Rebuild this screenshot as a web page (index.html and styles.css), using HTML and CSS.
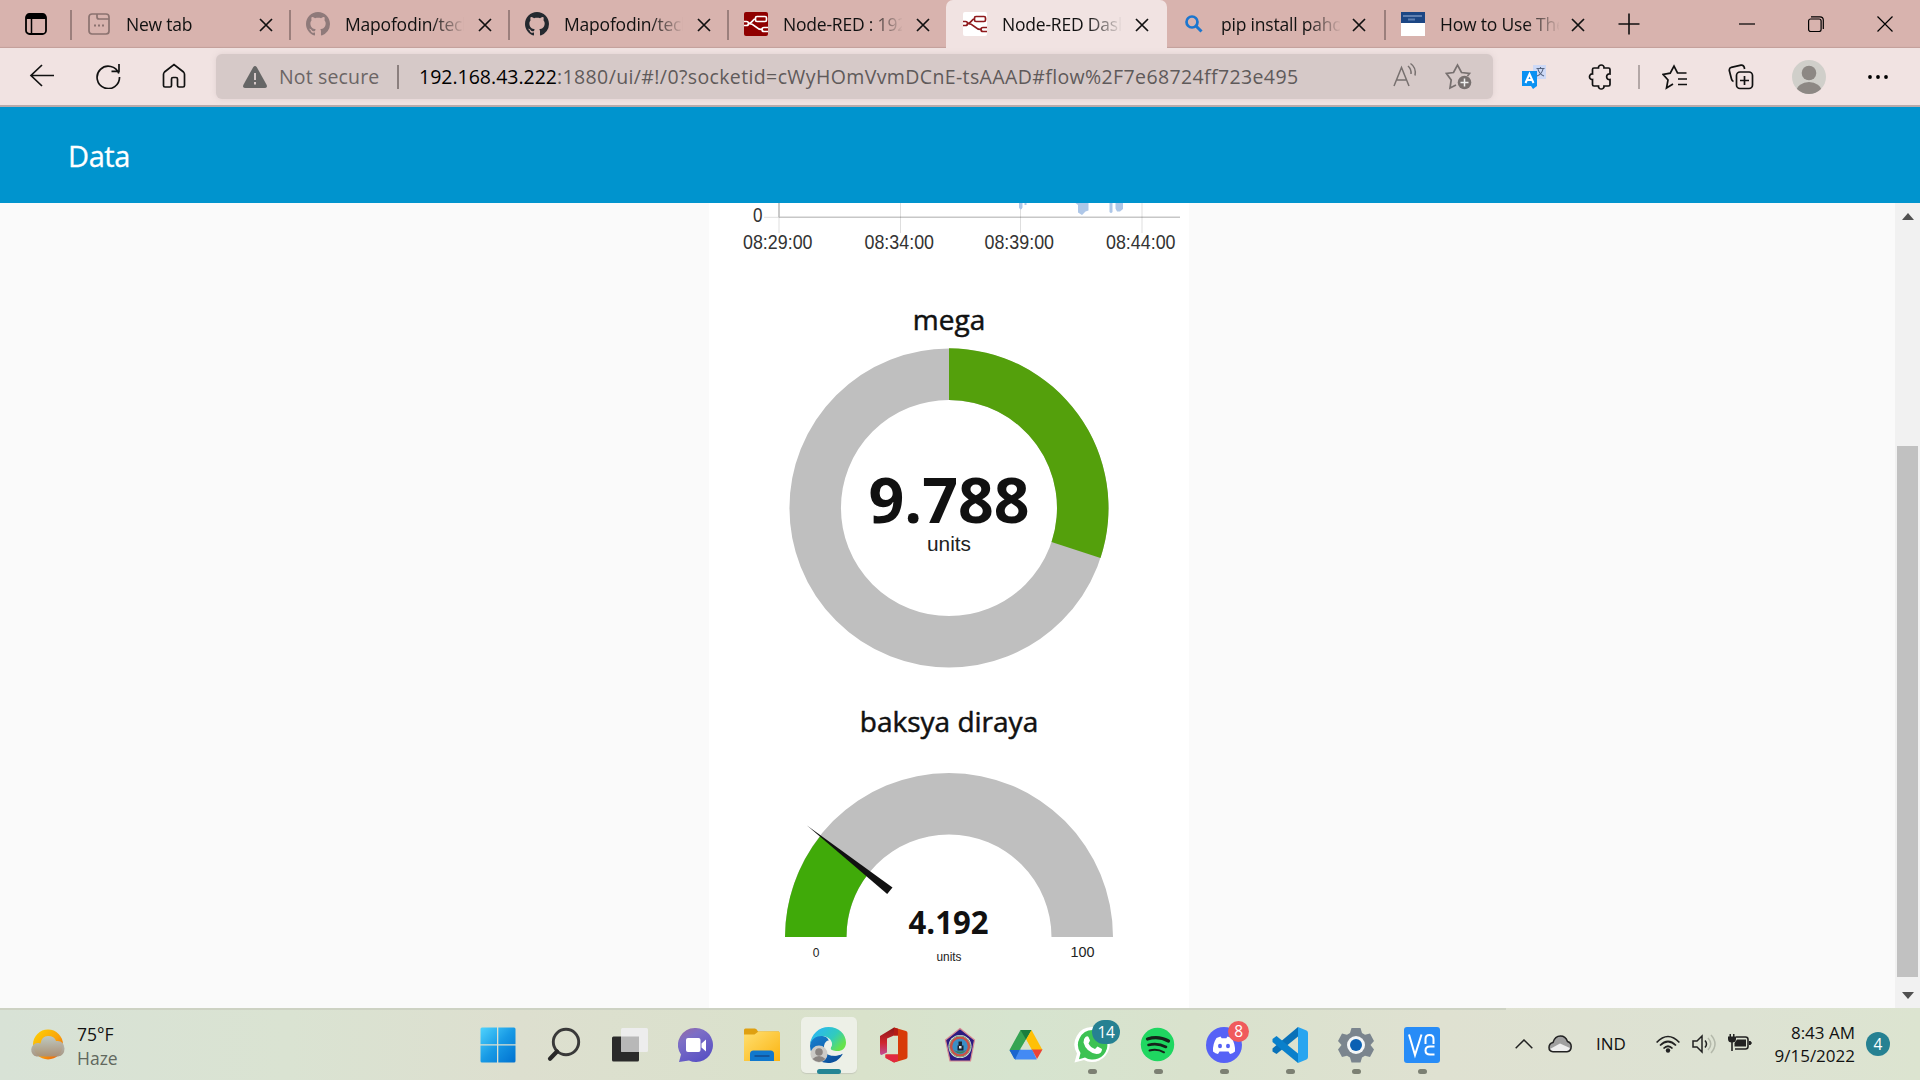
FILE: index.html
```html
<!DOCTYPE html>
<html lang="en">
<head>
<meta charset="utf-8">
<title>Node-RED Dashboard</title>
<link rel="stylesheet" href="styles.css">
</head>
<body>
<svg class="defs" width="0" height="0" aria-hidden="true">
  <symbol id="x" viewBox="0 0 14 14"><path d="M1 1l12 12M13 1L1 13" fill="none" stroke="#111" stroke-width="1.7"/></symbol>
  <symbol id="github" viewBox="0 0 16 16"><path fill-rule="evenodd" d="M8 0C3.58 0 0 3.58 0 8c0 3.54 2.29 6.53 5.47 7.59.4.07.55-.17.55-.38 0-.19-.01-.82-.01-1.49-2.01.37-2.53-.49-2.69-.94-.09-.23-.48-.94-.82-1.13-.28-.15-.68-.52-.01-.53.63-.01 1.08.58 1.23.82.72 1.21 1.87.87 2.33.66.07-.52.28-.87.51-1.07-1.78-.2-3.64-.89-3.64-3.95 0-.87.31-1.59.82-2.15-.08-.2-.36-1.02.08-2.12 0 0 .67-.21 2.2.82.64-.18 1.32-.27 2-.27s1.36.09 2 .27c1.53-1.04 2.2-.82 2.2-.82.44 1.1.16 1.92.08 2.12.51.56.82 1.27.82 2.15 0 3.07-1.87 3.75-3.65 3.95.29.25.54.73.54 1.48 0 1.07-.01 1.93-.01 2.2 0 .21.15.46.55.38A8.01 8.01 0 0 0 16 8c0-4.42-3.58-8-8-8z"/></symbol>
  <symbol id="nodered" viewBox="0 0 24 24"><g fill="none" stroke="currentColor" stroke-width="1.7"><rect x="11.5" y="4.5" width="11" height="5" rx="1.5"/><path d="M0 9.500h2.500q2 0 2 2t-2 2H0M24 15.500h-4q-2 0-2 2t2 2h4M4.500 11.500C9 11.500 8 7 11.500 7M4.500 11.500C12 11.500 11 17.500 18 17.500"/></g></symbol>
</svg>

<header class="tabs">
  <div class="tab-actions"><svg width="22" height="22" viewBox="0 0 22 22"><rect x="1" y="1" width="20" height="20" rx="3.500" fill="none" stroke="#000" stroke-width="1.800"/><path d="M1 6V4q0-3 3-3h14q3 0 3 3v2z"/><path d="M6.500 6v15" stroke="#000" stroke-width="1.500"/></svg></div>
  <div class="tab">
    <svg class="fav" viewBox="0 0 24 24"><g fill="none" stroke="#8b7370" stroke-width="1.700"><rect x="2" y="2" width="20" height="20" rx="3"/><path d="M10 2v3q0 2 2 2h10"/></g><path d="M7 12.500h2v2H7zM11 12.500h2v2h-2zM15 12.500h2v2h-2z" fill="#8b7370"/></svg>
    <span class="title t-new">New tab</span><svg class="close"><use href="#x"/></svg></div>
  <div class="tab"><svg class="fav" fill="#8f7a7a"><use href="#github"/></svg><span class="title">Mapofodin/tech</span><svg class="close"><use href="#x"/></svg></div>
  <div class="tab"><svg class="fav" fill="#24292f"><use href="#github"/></svg><span class="title">Mapofodin/tech</span><svg class="close"><use href="#x"/></svg></div>
  <div class="tab"><svg class="fav nr-red"><use href="#nodered"/></svg><span class="title">Node-RED : 192.</span><svg class="close"><use href="#x"/></svg></div>
  <div class="tab active"><svg class="fav nr-white"><use href="#nodered"/></svg><span class="title">Node-RED Dash</span><svg class="close"><use href="#x"/></svg></div>
  <div class="tab narrow plain"><svg class="fav" viewBox="0 0 24 24"><circle cx="10" cy="10" r="5.500" fill="none" stroke="#1b76cf" stroke-width="2.700"/><path d="M14 14l5.500 5.500" stroke="#1b76cf" stroke-width="3"/></svg><span class="title">pip install paho</span><svg class="close"><use href="#x"/></svg></div>
  <div class="tab narrow"><svg class="fav" viewBox="0 0 24 24"><path fill="#fff" d="M0 0h24v24H0z"/><path fill="#1c4684" d="M0 0h24v11H0z"/><path d="M2 4h19M7 7.500h7" stroke="#5f7fb0" stroke-width="2"/></svg><span class="title">How to Use The</span><svg class="close"><use href="#x"/></svg></div>
  <div class="new"><svg width="22" height="22" viewBox="0 0 22 22"><path d="M11 .5v21M.5 11h21" stroke="#111" stroke-width="1.600"/></svg></div>
  <div class="window">
    <svg width="16" height="16" viewBox="0 0 16 16"><path d="M0 8h16" stroke="#000" stroke-width="1.200"/></svg>
    <svg width="16" height="16" viewBox="0 0 16 16"><g fill="none" stroke="#000" stroke-width="1.200"><rect x=".6" y="3" width="12.500" height="12.500" rx="2"/><path d="M3 .8h9q3.300 0 3.300 3.300V13"/></g></svg>
    <svg width="16" height="16" viewBox="0 0 16 16"><path d="M.5.5l15 15M15.500.5l-15 15" stroke="#000" stroke-width="1.200"/></svg>
  </div>
</header>

<nav class="toolbar">
  <div class="nav-icons">
    <svg width="26" height="26" viewBox="0 0 26 26"><path d="M25 12.500H2M13 2L2 12.500 13 23" fill="none" stroke="#111" stroke-width="1.700"/></svg>
    <svg width="26" height="26" viewBox="0 0 26 26"><path d="M23.800 10.500A11.200 11.200 0 1 0 24.500 14M24 1v7.300h-7.500" fill="none" stroke="#111" stroke-width="1.700"/></svg>
    <svg width="26" height="26" viewBox="0 0 26 26"><path d="M2.500 11.500Q2.500 10 3.500 9L13 1.500 22.500 9q1 1 1 2.500v11q0 1.500-1.500 1.500h-4q-1.500 0-1.500-1.500V16q0-1.500-1.500-1.500h-3q-1.500 0-1.500 1.500v6.500Q10.500 24 9 24H4q-1.500 0-1.500-1.500z" fill="none" stroke="#111" stroke-width="1.700"/></svg>
  </div>
  <div class="address">
    <svg class="warn" width="24" height="22" viewBox="0 0 24 22"><path d="M10.300 1Q12-1 13.700 1L23.700 19Q24.500 22 21.500 22h-19Q-.5 22 .3 19z" fill="#666"/><path d="M12 7v7M12 16v2.500" stroke="#d5c8c8" stroke-width="2"/></svg>
    <span class="insecure">Not secure</span><i class="divider"></i>
    <span class="url"><b>192.168.43.222</b>:1880/ui/#!/0?socketid=cWyHOmVvmDCnE-tsAAAD#flow%2F7e68724ff723e495</span>
    <svg class="read" width="26" height="26" viewBox="0 0 26 26"><path d="M2 24L9.500 5.500 17 24M4.500 18h10M16 4q3.500 3 3 8M18.500 1.500q6 4 4.500 12" fill="none" stroke="#77706f" stroke-width="1.500"/></svg>
    <svg width="27" height="27" viewBox="0 0 27 27"><path d="M11 22l-6 3 1.200-8L1.500 10.500l7-1L12.500 2l4 7.500 8 1-2 2.500" fill="none" stroke="#77706f" stroke-width="1.700"/><circle cx="19.500" cy="19.500" r="6.800" fill="#77706f"/><path d="M19.500 15.500v8M15.500 19.500h8" stroke="#eee" stroke-width="1.500"/></svg>
  </div>
  <div class="tools">
    <svg class="translate" width="26" height="26" viewBox="0 0 26 26"><path d="M12 1h13v14H12z" fill="#cdd9f7"/><path d="M15.500 4.500h8M19.500 3v2M22 5q-1 5-6 7M17 5q1 5 6 7" stroke="#566580" fill="none" stroke-width="1.100"/><path d="M1 7h15v15l-4 3-2-3H1z" fill="#0a91f2"/><path d="M4.500 19l4-9 4 9M6 16h5" fill="none" stroke="#fff" stroke-width="2"/></svg>
    <svg class="puzzle" width="26" height="26" viewBox="0 0 26 26"><path d="M6 4h4.500C10 0 16.500 0 16 4h4.500Q22 4 22 5.500V10C17.500 9.500 17.500 16 22 15.500v5q0 1.500-1.500 1.500H16c.5 4-6 4-5.500 0H6q-1.500 0-1.500-1.500v-5C.500 16 .5 9.500 4.500 10V5.500Q4.500 4 6 4z" fill="none" stroke="#111" stroke-width="1.700"/></svg>
    <i class="divider"></i>
    <svg class="favs" width="26" height="26" viewBox="0 0 26 26"><path d="M11 20l-6.500 4L6 16 1.200 10.500l7-1.300L12 2l3.500 7h9M16 15h9M16 20.500h9" fill="none" stroke="#111" stroke-width="1.700"/></svg>
    <svg class="coll" width="26" height="26" viewBox="0 0 26 26"><g fill="none" stroke="#111" stroke-width="1.700"><rect x="8.500" y="8" width="16" height="16.500" rx="3.500"/><path d="M16.500 12v9M12 16.500h9M5.500 17.500Q4 17 3.500 15L1.300 6.500Q1 4 3.300 3.300L13 1.200q2.500-.4 3.300 2.300l.3 1.500"/></g></svg>
    <svg class="avatar" width="34" height="34" viewBox="0 0 34 34"><clipPath id="av"><circle cx="17" cy="17" r="17"/></clipPath><g clip-path="url(#av)"><path fill="#d0cfca" d="M0 0h34v34H0z"/><circle cx="17" cy="13" r="7.300" fill="#8d8884"/><ellipse cx="17" cy="31" rx="12.500" ry="9" fill="#8d8884"/></g></svg>
    <svg class="more" width="22" height="6" viewBox="0 0 22 6"><circle cx="3" cy="3" r="1.900"/><circle cx="11" cy="3" r="1.900"/><circle cx="19" cy="3" r="1.900"/></svg>
  </div>
</nav>

<section class="titlebar"><h1>Data</h1></section>

<main class="page">
  <div class="canvas">
    <div class="card">
      <svg class="chart" width="480" height="60" viewBox="709 203 480 60">
        <g stroke="#000" stroke-opacity=".13" stroke-width="1"><path d="M900.500 203v30M1020.500 203v30M1142 203v30M779 203v30" /><path stroke-opacity=".22" stroke-width="1.400" d="M779 217.300h401M779 203v14"/><path d="M764 217.300h15"/></g>
        <path d="M1019 203h3.500v4.500q-1.700 4-3.500 0zM1024.500 203h2v2h-2zM1075.500 203h13v7.500l-3 1-3.500 3.500-4-2.500V205zM1109.500 203h3v9q-1.500 2-3 0zM1115.500 203h7.500v6l-3 2.500h-3l-1.500-3z" fill="#aec7e8"/>
        <g class="ticks"><text x="753" y="221.500" textLength="9.500" lengthAdjust="spacingAndGlyphs">0</text><text x="743" y="249" textLength="69.500" lengthAdjust="spacingAndGlyphs">08:29:00</text><text x="864.500" y="249" textLength="69.500" lengthAdjust="spacingAndGlyphs">08:34:00</text><text x="984.500" y="249" textLength="69.500" lengthAdjust="spacingAndGlyphs">08:39:00</text><text x="1106" y="249" textLength="69.500" lengthAdjust="spacingAndGlyphs">08:44:00</text></g>
      </svg>
      <h2 class="t-mega">mega</h2>
      <svg class="donut" width="480" height="330" viewBox="709 343 480 330">
        <circle cx="949" cy="508" r="133.800" fill="none" stroke="#bfbfbf" stroke-width="51.500"/>
        <path d="M949 348.300A159.700 159.700 0 0 1 1100.500 558L1051.500 542A108 108 0 0 0 949 400z" fill="#54a00c"/>
        <text class="num" x="949" y="523" font-size="62" textLength="161" lengthAdjust="spacingAndGlyphs">9.788</text>
        <text class="unit" x="949" y="551" font-size="20.500" textLength="44" lengthAdjust="spacingAndGlyphs">units</text>
      </svg>
      <h2 class="t-bak">baksya diraya</h2>
      <svg class="gauge" width="480" height="220" viewBox="709 758 480 220">
        <path d="M785 937a164 164 0 0 1 328 0h-61.500a102.500 102.500 0 0 0-205 0z" fill="#bfbfbf"/>
        <path d="M785 937A164 164 0 0 1 820.300 836L868.500 873.600A102.500 102.500 0 0 0 846.500 937z" fill="#40aa09"/>
        <path d="M807 825.500L892.500 887.500 887.200 894z" fill="#111"/>
        <text class="num" x="948.500" y="934" font-size="32" textLength="80" lengthAdjust="spacingAndGlyphs">4.192</text>
        <text class="unit" x="949" y="961" font-size="12.500" textLength="25" lengthAdjust="spacingAndGlyphs">units</text>
        <text class="unit" x="816" y="957" font-size="12">0</text>
        <text class="unit" x="1082.500" y="957" font-size="15" textLength="24" lengthAdjust="spacingAndGlyphs">100</text>
      </svg>
    </div>
  </div>
  <div class="scroll"><svg width="12" height="7"><path d="M0 7l6-7 6 7z" fill="#505050"/></svg><div class="thumb"></div><svg width="12" height="7"><path d="M0 0l6 7 6-7z" fill="#505050"/></svg></div>
</main>

<footer class="taskbar">
  <div class="weather">
    <svg width="36" height="32" viewBox="0 0 36 32"><defs><linearGradient id="sun" x2="1" y2="1"><stop stop-color="#fed403"/><stop offset=".55" stop-color="#f9a20b"/><stop offset="1" stop-color="#e9510c"/></linearGradient><linearGradient id="cl" x2="0" y2="1"><stop stop-color="#b9cbd0"/><stop offset="1" stop-color="#a5917c"/></linearGradient></defs><circle cx="19" cy="15.500" r="15" fill="url(#sun)"/><path d="M7.500 27.500a6.800 6.800 0 0 1 1-13.400q2-.2 3 .4 1-7.500 7.500-7.500t8 5q8-1 8.500 7.500 0 7-6.500 8z" fill="url(#cl)" opacity=".93"/></svg>
    <div><p class="temp">75°F</p><p class="haze">Haze</p></div>
  </div>
  <div class="apps">
    <div class="app"><svg viewBox="0 0 36 36"><defs><linearGradient id="win" x2="1" y2="1"><stop stop-color="#4fd3fd"/><stop offset=".5" stop-color="#189ae5"/><stop offset="1" stop-color="#0071d0"/></linearGradient></defs><path d="M.5 2Q.5.5 2 .5h15v16.700H.5zM18.300.500H34q1.500 0 1.500 1.500v15.200H18.300zM.5 18.500H17v17H2q-1.500 0-1.500-1.500zM18.300 18.500h17.200V34q0 1.500-1.500 1.500H18.300z" fill="url(#win)"/></svg></div>
    <div class="app"><svg viewBox="0 0 36 36"><circle cx="20" cy="15" r="12.700" fill="none" stroke="#393939" stroke-width="2.900"/><path d="M11 24.500L4 31.800" stroke="#292929" stroke-width="4.200" stroke-linecap="round"/></svg></div>
    <div class="app"><svg viewBox="0 0 36 36"><rect x="0" y="9.500" width="27" height="25" rx="1.500" fill="#2a2a2a"/><rect x="9" y="1" width="27" height="24" rx="1.500" fill="#ededed"/><path d="M9 9.500h18V25H10.500Q9 25 9 23.500z" fill="#b8b8b8"/></svg></div>
    <div class="app"><svg viewBox="0 0 36 36"><defs><linearGradient id="chat" x1=".1" x2=".7" y2="1"><stop stop-color="#9569a5"/><stop offset=".3" stop-color="#7d6fc6"/><stop offset="1" stop-color="#5850c4"/></linearGradient></defs><path d="M18 1a17 17 0 1 1-7 32.500L1 35l2-7.500A17 17 0 0 1 18 1z" fill="url(#chat)"/><rect x="8" y="11" width="14.500" height="14" rx="2" fill="#fff"/><path d="M23.500 16.500l4.500-4v12l-4.500-4z" fill="#fff"/></svg></div>
    <div class="app"><svg viewBox="0 0 36 36"><defs><linearGradient id="fold" x2="1" y2="1"><stop stop-color="#ffdf70"/><stop offset="1" stop-color="#fbb411"/></linearGradient></defs><path d="M0 3q0-1.500 1.500-1.500h9.500q1.500 0 3 3H35V10H0z" fill="#dfa011"/><path d="M0 7.500h10.500l4-3H34.500q1.500 0 1.500 1.500v28H0z" fill="url(#fold)"/><path d="M6 34V27q0-3.500 3.500-3.500H26.500q3.500 0 3.500 3.500v7z" fill="#1078cd"/><path d="M10.500 29h15" stroke="#124f91" stroke-width="1.600"/></svg></div>
    <div class="app current"><svg viewBox="0 0 36 36"><defs><linearGradient id="e1" x2="1" y2=".6"><stop offset=".25" stop-color="#2cbbe7"/><stop offset=".65" stop-color="#31cbbd"/><stop offset="1" stop-color="#66e24b"/></linearGradient><linearGradient id="e2" x2=".8" y2="1"><stop stop-color="#1782d2"/><stop offset="1" stop-color="#0c4d98"/></linearGradient></defs><path d="M0 19Q0 10 9 8.500q9 0 10 6-5 2-5 7c1 8 10 9 19 5-4 7-9 9.500-15 9.500Q1 35 0 19z" fill="url(#e2)"/><path d="M0 18C1 7 9 0 18.500 0 29 0 36 7.500 36 15.500c0 6-4 8.500-8.500 8.500-4 0-7-1-7-2.500 0-1.500 1.500-2 1.500-4.500C22 12 17 9 11.500 9 6 9 1.500 12 0 18z" fill="url(#e1)"/><path d="M14 19q1-5.500 5-5.500 3 1.500 3 4-1.500 3.500-1.500 4.500 2 3 7.500 2.500 3 0 5-1v3q-5 3-10.500 1.500Q14 27 14 19z" fill="#edf0e9"/><circle cx="9" cy="27" r="8.500" fill="#cccbc7"/><circle cx="9" cy="25" r="3.800" fill="#8a8582"/><path d="M2.500 32q6.500-6 13 0Q9 38 2.500 32z" fill="#8a8582"/></svg></div>
    <div class="app"><svg viewBox="0 0 36 36"><defs><linearGradient id="o1" x2="0" y2="1"><stop stop-color="#8c1617"/><stop offset=".55" stop-color="#cf262d"/><stop offset="1" stop-color="#c24d97"/></linearGradient></defs><path d="M4 9L18 .5v8l-7 3v14L5.500 28Q4 28 4 26z" fill="url(#o1)"/><path d="M18 .5L30 4q1.500.5 1.500 2v24q0 1.500-1.500 2l-12 3.500-8.500-5V27.500H22V8.500l-4 0z" fill="#d83b09"/><path d="M9.500 27.500H22V34l-4 1.500L9.500 31z" fill="#e12840"/><path d="M18 .5l4 1.200V8.500h-4z" fill="#b51a14"/></svg></div>
    <div class="app"><svg viewBox="0 0 36 36"><path d="M18 1.500L32.500 13 28.500 34H8L3.500 13z" fill="#2b1a80" stroke="#d98a94" stroke-width="1.200"/><circle cx="18" cy="19.500" r="11.500" fill="#e9eceb"/><circle cx="18" cy="19.500" r="9" fill="#3b8fc6" stroke="#c85248" stroke-width="2.600"/><circle cx="18" cy="19.500" r="10.600" fill="none" stroke="#6d9a74" stroke-width=".9"/><path d="M16.500 14.500h3.500v4h1.500v5h-6v-5h1z" fill="#1c2432"/><path d="M11.500 23q6.500 3 13 0-6 7-13 0z" fill="#3f7d56"/><path d="M17 19h2.500v2.500H17z" fill="#e6e9ea"/></svg></div>
    <div class="app"><svg viewBox="0 0 36 36"><path d="M12.500 3h11L18 13 7.500 32.500 1.500 23z" fill="#35a452"/><path d="M12.500 3h11L18 12.500z" fill="#197d3d"/><path d="M23.500 3l11 20H23.500L18 12.500z" fill="#ffc007"/><path d="M1.500 23H11.800L7.500 32.500 6 31.500z" fill="#1966cf"/><path d="M11.800 22.500h12.500l4.500 10H7z" fill="#438af4"/><path d="M24 22.500h10.500L29 32z" fill="#eb4436"/><path d="M18 12.500l5.700 10H12z" fill="#d8e2cd"/></svg></div>
    <div class="app run"><svg viewBox="0 0 36 36"><path d="M18.500 0A17.500 17.500 0 1 1 10 33L.5 35.500 3 26.500A17.500 17.500 0 0 1 18.500 0z" fill="#fff"/><path d="M18.500 3a14.800 14.800 0 1 1-7.500 27.500l-6 1.800L6.500 26A14.800 14.800 0 0 1 18.500 3z" fill="#3dc253"/><path d="M11.500 10q2-1.500 3 0l1.500 3.500-1.500 3q2 4 6.500 5.500l2.500-2.500 4.500 2.500q0 5-5.500 5Q12 25 9.500 15.500q0-4 2-5.500z" fill="#fff"/></svg><span class="badge teal">14</span></div>
    <div class="app run"><svg viewBox="0 0 36 36"><circle cx="17.500" cy="17.500" r="16.700" fill="#1fd761"/><g fill="none" stroke="#15231a" stroke-linecap="round"><path d="M7.500 12q11-3.500 21 2" stroke-width="3.200"/><path d="M8.500 18q9-2.500 17.500 2" stroke-width="2.600"/><path d="M9.500 23.500q8-2 14.500 1.800" stroke-width="2"/></g></svg></div>
    <div class="app run"><svg viewBox="0 0 36 36"><circle cx="18" cy="18" r="18" fill="#5662f6"/><path d="M10.500 11l4-1.500 1.200 1.800h4.600l1.200-1.800 4 1.500q4 6 3.500 13.500-2.500 2-5 2.500l-1.500-2.500h-9L12 27q-2.500-.5-5-2.500Q6.500 17 10.500 11z" fill="#fff"/><ellipse cx="14" cy="19" rx="2" ry="2.300" fill="#5662f6"/><ellipse cx="22" cy="19" rx="2" ry="2.300" fill="#5662f6"/></svg><span class="badge red">8</span></div>
    <div class="app run"><svg viewBox="0 0 36 36"><path d="M26 0v9.500L4.500 27 .5 24.500v-3z" fill="#0971b8"/><path d="M26 36v-9.500L4.500 9 .5 12v3z" fill="#0a80cb"/><path d="M26 0l8.500 3.500q1.500.7 1.500 2.500v24q0 1.800-1.500 2.500L26 36z" fill="#27a5f0"/></svg></div>
    <div class="app run"><svg viewBox="0 0 36 36"><path d="M13.500 1h9l1.500 5 3 1.800 5-1.300L36 14l-3.500 4L36 22.500 32 30l-5-1.300-3 1.800-1.500 5h-9l-1.500-5-3-1.800L4 30 0 22.500 3.500 18 0 14l4-7.500 5 1.300L12 6z" fill="#7b858e"/><circle cx="18" cy="18" r="9" fill="#f4f6f7"/><circle cx="18" cy="18" r="6" fill="#0b60b3"/></svg></div>
    <div class="app run"><svg viewBox="0 0 36 36"><rect width="36" height="36" rx="3" fill="#278cf7"/><g fill="none" stroke="#fff" stroke-width="2"><path d="M5 7.500l6 20.500L17.500 7.500M21.500 17V12q0-4 4-4t4 4v5M30.500 19.500H26q-4.500 0-4.500 4t4.500 4h4.500"/></g></svg></div>
  </div>
  <div class="tray">
    <svg class="chev" width="18" height="10" viewBox="0 0 18 10"><path d="M.7 9.300L9 1l8.300 8.300" fill="none" stroke="#222" stroke-width="1.500"/></svg>
    <svg class="cloud" width="24" height="18" viewBox="0 0 24 18"><path d="M5 16.800Q1 16.500 1 12.500 1 8.500 5 7.500 7 1 12.500 1q5 0 7 5.500 3.700 1.200 3.700 5 0 4.800-4.200 5.300z" fill="#a0a0a0"/><path d="M2 14l10-5.500 10 4.500-2 3.500H5z" fill="#eee"/><path d="M5 16.800Q1 16.500 1 12.500 1 8.500 5 7.500 7 1 12.500 1q5 0 7 5.500 3.700 1.200 3.700 5 0 4.800-4.200 5.300z" fill="none" stroke="#222" stroke-width="1.500"/></svg>
    <span class="lang">IND</span>
    <svg class="wifi" width="24" height="18" viewBox="0 0 24 18"><g fill="none" stroke="#222" stroke-width="1.700"><path d="M.6 7.500Q12-4.500 23.400 7.500M4 10.500q8-8 16 0M7.500 13.500q4.500-4.500 9 0"/></g><circle cx="12" cy="15.500" r="2.200" fill="#222"/></svg>
    <svg class="vol" width="24" height="20" viewBox="0 0 24 20"><path d="M1 7h4l5-5v16l-5-5H1zM13 6.500q3 3.500 0 7" fill="none" stroke="#222" stroke-width="1.500"/><path d="M16 4q5.500 6 0 12M19 1q8 9 0 18" fill="none" stroke="#b3b8aa" stroke-width="1.500"/></svg>
    <svg class="batt" width="24" height="20" viewBox="0 0 24 20"><path d="M8 4h9.500Q20 4 20 6.500v7q0 2.500-2.500 2.500H7M4 9v9" fill="none" stroke="#222" stroke-width="1.600"/><path d="M9 6.500h9v7H6.500V10zM21 8h1.500l1.500 2-1.500 2H21zM0 3.500h1.500V1H3v2.500h2V1h1.500v2.500H8V6Q8 9.500 4 9.500T0 6z" fill="#222"/></svg>
    <div class="clock"><p class="time">8:43 AM</p><p class="date">9/15/2022</p></div>
    <span class="count">4</span>
  </div>
</footer>
</body>
</html>
```
FILE: styles.css
```css
* { box-sizing: border-box; margin: 0; padding: 0; }
body { width: 1920px; height: 1080px; overflow: hidden; display: flex; flex-direction: column; font-family: "Open Sans", "Noto Sans", sans-serif; color: #111; background: #fafafa; }
svg { display: block; flex: none; }
.defs { position: absolute; }

/* Tab strip */
.tabs { flex: none; height: 48px; display: flex; background: #d8b3ae; box-shadow: inset 0 -2px 1px -1px #c49f9b; }
.tab-actions { width: 70px; padding: 13px 0 0 25px; }
.tab { position: relative; width: 219px; height: 48px; display: flex; align-items: center; padding-left: 17px; }
.tab::before { content: ""; position: absolute; left: 0; top: 10px; width: 2px; height: 30px; background: #9b7f7c; }
.tab.narrow { width: 217px; }
.tab.narrow .close { margin-left: 12px; }
.tab.active { width: 221px; background: #f1e3e2; border-radius: 7px 7px 0 0; }
.tab.active::before, .tab.plain::before { display: none; }
.tab.plain { padding-left: 15px; }
.tab.plain .title { margin-left: 15px; }
.fav { width: 24px; height: 24px; }
.nr-red { background: #8f0000; color: #fff; border-radius: 2px; }
.nr-white { background: #fff; color: #8f1a1d; border-radius: 2px; }
.title { width: 119px; margin-left: 15px; font-size: 17.5px; letter-spacing: -.2px; line-height: 46px; white-space: nowrap; overflow: hidden; mask-image: linear-gradient(90deg, #000 72%, transparent 101%); }
.close { width: 14px; height: 14px; margin: 2px 0 0 14px; }
.new { padding: 13px 0 0 17px; }
.window { margin-left: auto; display: flex; gap: 53px; padding: 16px 27px 0 0; }

/* Address toolbar */
.toolbar { flex: none; height: 59px; display: flex; padding-top: 6px; background: #f1e3e2; border-bottom: 2px solid #b9aaaa; }
.nav-icons { width: 216px; display: flex; gap: 40px; padding: 9px 0 0 29px; }
.address { width: 1277px; height: 45px; display: flex; align-items: center; padding-left: 27px; border-radius: 6px; background: #d6c9c8; box-shadow: 0 0 6px #dfd0d0; font-size: 19.5px; }
.insecure { width: 101px; margin-left: 12px; color: #6b6565; white-space: nowrap; letter-spacing: .15px; }
.divider { width: 2px; height: 24px; background: #8b7f7e; }
.address .divider { margin-left: 17px; }
.url { width: 950px; margin-left: 20px; color: #5f5a5a; white-space: nowrap; letter-spacing: .38px; }
.url b { font-weight: 400; color: #000; letter-spacing: 0; }
.read { margin: -3px 27px 0 23px; }
.tools { display: flex; align-items: center; height: 45px; }
.translate { margin-left: 28px; }
.puzzle { margin-left: 41px; }
.tools .divider { margin: 0 22px 0 24px; background: #b3a7a6; }
.coll { margin-left: 40px; }
.avatar { margin: 0 41px 0 38px; }

/* Dashboard */
.titlebar { flex: none; height: 96px; background: #0094ce; padding: 29px 68px; color: #fff; }
.titlebar h1 { font-size: 29px; font-weight: 400; line-height: 40px; letter-spacing: -.4px; -webkit-text-stroke: .3px; }
.page { flex: none; height: 805px; display: flex; }
.canvas { flex: 1; display: flex; padding-left: 709px; }
.card { width: 480px; background: #fff; text-align: center; }
.card h2 { font-size: 28px; font-weight: 400; line-height: 40px; height: 40px; white-space: nowrap; -webkit-text-stroke: .5px; }
.t-mega { margin-top: 36px; }
.donut { margin-top: 4px; }
.t-bak { margin-top: 28px; }
.gauge { margin-top: 17px; }
.ticks { font: 20px "Liberation Sans", sans-serif; fill: #333; }
.num { font-family: "Open Sans", sans-serif; font-weight: 700; fill: #111; text-anchor: middle; }
.unit { font-family: "Liberation Sans", sans-serif; fill: #222; text-anchor: middle; }
.scroll { width: 25px; background: #f1f1f1; display: flex; flex-direction: column; align-items: center; padding: 10px 0 9px; }
.thumb { width: 21px; height: 531px; margin: auto 0 15px; background: #c1c1c1; }

/* Windows taskbar */
.taskbar { flex: none; height: 72px; display: flex; background: linear-gradient(90deg, #d8e2d6 0, #dae3d2 15%, #dddfcf 27%, #d9e2cb 45%, #d6e4cf 53%, #d9e2cd 62%, #dfe1d1 75%, #dde2d3 90%, #dce4d0 100%); }
.taskbar::before { content: ""; position: absolute; width: 1506px; height: 2px; background: #cdd2c3; }
.weather { width: 465px; display: flex; gap: 12px; padding: 21px 0 0 29px; }
.weather p { line-height: 24px; font-size: 17.5px; white-space: nowrap; }
.weather div { margin-top: -7px; }
.temp { margin-top: 0; }
.haze { color: #61685e; }
.apps { display: flex; }
.app { position: relative; width: 66px; padding: 19px 15px 0; }
.app svg { position: relative; width: 36px; height: 36px; }
.run::after { content: ""; position: absolute; left: 29px; top: 61px; width: 9px; height: 5px; border-radius: 3px; background: #7c8073; }
.current::before { content: ""; position: absolute; left: 6px; top: 9px; width: 56px; height: 56px; border-radius: 5px; background: #edf0e7; box-shadow: 0 1px 1px #c5cabb; }
.current::after { content: ""; position: absolute; left: 22px; top: 61px; width: 24px; height: 5px; border-radius: 3px; background: #248594; }
.badge { position: absolute; color: #fff; text-align: center; border-radius: 12px; font-size: 15.5px; letter-spacing: -.3px; }
.teal { left: 33px; top: 12px; width: 28px; height: 24px; line-height: 24px; background: #268192; }
.red { left: 37px; top: 13px; width: 21px; height: 21px; line-height: 21px; background: #f05b5c; }
.tray { flex: 1; display: flex; padding-left: 60px; font-size: 17px; white-space: nowrap; }
.chev { margin: 31px 15px 0 0; }
.cloud { margin: 27px 24px 0 0; }
.lang { width: 30px; line-height: 72px; }
.wifi { margin: 27px 12px 0 30px; }
.vol { margin: 26px 12px 0 0; }
.batt { margin: 25px 0 0; }
.clock { width: 103px; padding-top: 13px; text-align: right; line-height: 23px; }
.count { margin: 24px 0 0 11px; width: 24px; height: 24px; border-radius: 50%; background: #268192; color: #fff; text-align: center; line-height: 24px; font-size: 15.5px; }
```
